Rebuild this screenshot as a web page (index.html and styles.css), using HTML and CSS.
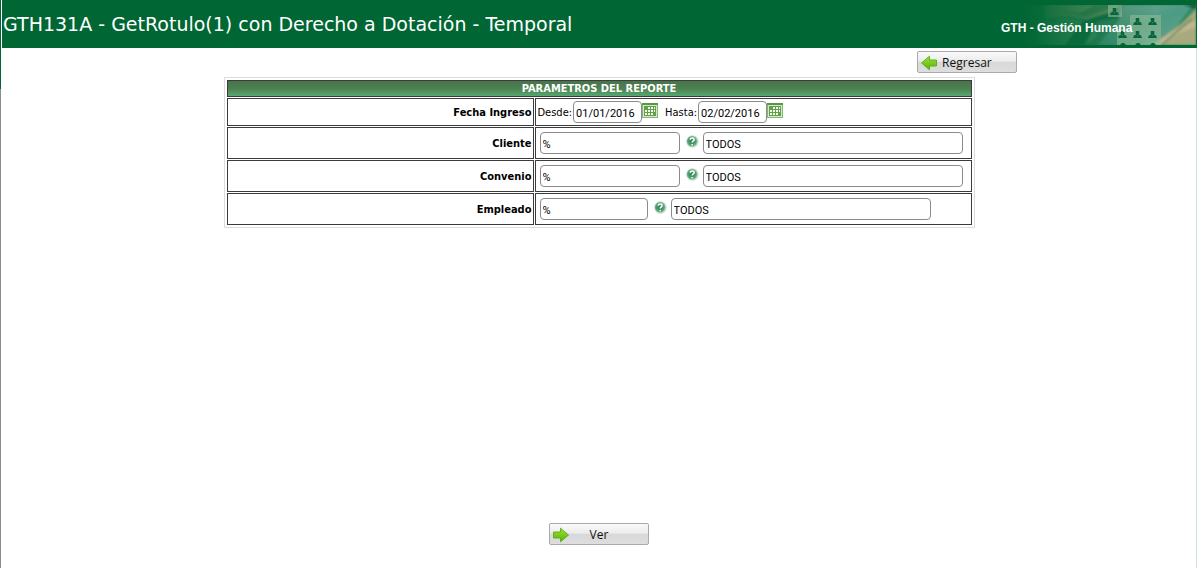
FILE: index.html
```html
<!DOCTYPE html>
<html lang="es">
<head>
<meta charset="utf-8">
<title>GTH131A - GetRotulo(1) con Derecho a Dotación - Temporal</title>
<link rel="stylesheet" href="styles.css">
</head>
<body>
<svg class="defs" aria-hidden="true">
  <defs>
    <linearGradient id="leaf" x1="0" y1="0" x2="0" y2="1"><stop offset="0" stop-color="#a2e03c"/><stop offset="1" stop-color="#55b400"/></linearGradient>
    <radialGradient id="ball"><stop offset="0" stop-color="#2c8050"/><stop offset=".7" stop-color="#4f9c70"/><stop offset="1" stop-color="#7cbb94"/></radialGradient>
  </defs>
  <symbol id="calendar" viewBox="0 0 16 15">
    <path d="M0 0h16v15H0z" fill="#86b774"/><path d="M0 0h16v2H0z" fill="#559a42"/>
    <path d="M1 2h14v12H1z" fill="#d4e9c9"/>
    <path d="M2 3h12v10H2z" fill="#62a04c"/>
    <path d="M6 4h2v2H6zM9 4h2v2H9zM12 4h1v2h-1zM3 7h2v2H3zM6 7h2v2H6zM9 7h2v2H9zM12 7h1v2h-1zM3 10h2v2H3zM6 10h2v2H6zM9 10h2v2H9z" fill="#f4fbee"/>
  </symbol>
  <symbol id="help" viewBox="0 0 13 13">
    <circle cx="6.5" cy="6.5" r="6.2" fill="#c5dfcc"/><circle cx="6" cy="6.2" r="5.2" fill="url(#ball)"/>
    <path d="M4.3 4.7C4.3 2.4 8.2 2.5 8.1 4.7 8 6 6.2 6 6.2 7.6M6.2 9v1.3" fill="none" stroke="#fff" stroke-width="1.5"/>
  </symbol>
  <symbol id="arrow" viewBox="0 0 18 16">
    <path d="M1.5 5h7V1.2L16.5 8l-8 6.8V11h-7z" fill="url(#leaf)" stroke="#62ad20" stroke-linejoin="round"/>
  </symbol>
  <symbol id="person" viewBox="0 0 10 9">
    <path d="M3 0h4v4H6l3 1 1 3H0l1-3 3-1H3z" fill="#08643e"/><path d="M4 5h2L5 6z" fill="#75a880"/>
  </symbol>
</svg>

<header class="header">
  <h1 class="title">GTH131A - GetRotulo(1) con Derecho a Dotación - Temporal</h1>
  <div class="banner">
    <svg class="art" viewBox="0 0 196 40" aria-hidden="true">
      <defs>
        <linearGradient id="fade"><stop offset=".12" stop-color="#063"/><stop offset=".55" stop-color="#063" stop-opacity=".35"/><stop offset=".8" stop-color="#063" stop-opacity="0"/></linearGradient>
        <linearGradient id="cloth" x1="0" y1="0" x2="1" y2="1"><stop offset="0" stop-color="#80aa98"/><stop offset=".5" stop-color="#4c9b85"/><stop offset="1" stop-color="#6aa189"/></linearGradient>
        <filter id="soft"><feGaussianBlur stdDeviation="1"/></filter>
      </defs>
      <path d="M0 0h196v40H0z" fill="#338965"/>
      <g filter="url(#soft)">
        <path d="M45 0h80l-12 11-19 4-27-4-22 3z" fill="#799c70"/>
        <path d="M58 6l28 6 19-6 12-6H94L80 8z" fill="#4b8759"/>
        <path d="M35 20l30-7 27 5 5 13-12 9H40z" fill="#53976f"/>
        <path d="M85 40l12-24 27-4 12-12h-16l-13 8-25 8-17 24z" fill="#196f4b"/>
        <path d="M122 0h70l-14 20-22 20H98l21-25z" fill="url(#cloth)"/>
        <path d="M196 4v36h-44l14-10 16-12z" fill="#a6aa7c"/>
        <path d="M196 15l-23 11-21 14h12l13-11 19-7z" fill="#c0b791"/>
        <path d="M174 29l-12 11M192 14l-18 15" stroke="#6d9168" stroke-width="2"/>
        <path d="M184 0h12v4z" fill="#164f3b"/>
      </g>
      <path d="M0 0h196v40H0z" fill="url(#fade)"/>
      <path d="M108 0h14v12h-14zM130 10h14v14h-14zM144 10h17v14h-17zM130 24h14v16h-14zM144 24h17v16h-17zM117 24h13v16h-13z" fill="#8fbb96" opacity=".6"/>
      <use href="#person" x="110" y="3" width="9" height="8"/>
      <use href="#person" x="133" y="13" width="9" height="8"/><use href="#person" x="148" y="13" width="9" height="8"/>
      <use href="#person" x="118" y="26" width="9" height="8"/><use href="#person" x="133" y="26" width="9" height="8"/><use href="#person" x="148" y="26" width="9" height="8"/>
      <path d="M120 40l2-2h2l2 2zM135 40l2-2h2l2 2zM150 40l2-2h2l2 2z" fill="#08643e"/>
    </svg>
    <span class="module">GTH - Gestión Humana</span>
  </div>
</header>

<main class="main">
  <div class="toolbar">
    <button class="button" type="button"><svg class="arrow back" aria-hidden="true"><use href="#arrow"/></svg><span class="caption">Regresar</span></button>
  </div>
  <form class="form">
    <table class="params">
      <colgroup><col class="names"><col></colgroup>
      <thead><tr><th class="heading" colspan="2">PARAMETROS DEL REPORTE</th></tr></thead>
      <tbody>
        <tr>
          <th class="name" scope="row">Fecha Ingreso</th>
          <td class="value"><div class="dates">
            <label class="date-label" for="desde">Desde:</label><input class="field date" id="desde" value="01/01/2016"><button class="icon-button calendar" type="button" aria-label="Calendario desde"><svg class="calendar-icon"><use href="#calendar"/></svg></button>
            <label class="date-label" for="hasta">Hasta:</label><input class="field date" id="hasta" value="02/02/2016"><button class="icon-button" type="button" aria-label="Calendario hasta"><svg class="calendar-icon"><use href="#calendar"/></svg></button>
          </div></td>
        </tr>
        <tr>
          <th class="name" scope="row"><label for="cliente">Cliente</label></th>
          <td class="value"><div class="lookup"><input class="field code" id="cliente" value="%"><button class="icon-button" type="button" aria-label="Buscar cliente"><svg class="help-icon"><use href="#help"/></svg></button><input class="field detail" aria-label="Nombre del cliente" value="TODOS"></div></td>
        </tr>
        <tr>
          <th class="name" scope="row"><label for="convenio">Convenio</label></th>
          <td class="value"><div class="lookup"><input class="field code" id="convenio" value="%"><button class="icon-button" type="button" aria-label="Buscar convenio"><svg class="help-icon"><use href="#help"/></svg></button><input class="field detail" aria-label="Nombre del convenio" value="TODOS"></div></td>
        </tr>
        <tr>
          <th class="name" scope="row"><label for="empleado">Empleado</label></th>
          <td class="value"><div class="lookup"><input class="field code short" id="empleado" value="%"><button class="icon-button" type="button" aria-label="Buscar empleado"><svg class="help-icon"><use href="#help"/></svg></button><input class="field detail" aria-label="Nombre del empleado" value="TODOS"></div></td>
        </tr>
      </tbody>
    </table>
    <div class="actions">
      <button class="button" type="button"><svg class="arrow" aria-hidden="true"><use href="#arrow"/></svg><span class="caption">Ver</span></button>
    </div>
  </form>
</main>
</body>
</html>
```
FILE: styles.css
```css
* { box-sizing: border-box; }
body {
  margin: 0;
  min-height: 100vh;
  display: flex;
  flex-direction: column;
  padding-left: 1px;
  border-style: solid;
  border-width: 0 0 0 1px;
  border-image: linear-gradient(#063 90px, #8c8c8c 90px) 1;
  background: #fff;
  font: 11px/14px "DejaVu Sans Condensed", "DejaVu Sans", sans-serif;
  color: #000;
}
.defs { position: absolute; width: 0; height: 0; }
.header {
  display: flex;
  align-items: center;
  justify-content: space-between;
  height: 48px;
  margin-right: 1px;
  padding-right: 1px;
  background: #063;
}
.title {
  margin: 0;
  padding-left: 1px;
  font: 19px/24px "DejaVu Sans", sans-serif;
  color: #fff;
  white-space: nowrap;
}
.banner { display: grid; align-items: center; margin-top: 2px; }
.art { grid-area: 1 / 1; width: 196px; height: 40px; }
.module {
  grid-area: 1 / 1;
  padding: 5px 0 0 1px;
  font: bold 12px/14px "Liberation Sans", sans-serif;
  color: #fff;
}
.main {
  flex: 1;
  display: flex;
  flex-direction: column;
  margin-right: 1px;
  border-right: 1px solid #d5e1e8;
}
.toolbar { display: flex; justify-content: flex-end; padding: 3px 15% 4px 0; }
.form { flex: 1; display: flex; flex-direction: column; align-items: center; }
.params {
  width: 100%;
  max-width: 751px;
  table-layout: fixed;
  border: 1px solid #dcdce0;
  border-spacing: 1px;
  padding: 1px;
}
.names { width: 307px; }
.params th, .params td { border: 1px solid #3c3c3c; padding: 1px; }
.params .heading {
  padding: 1px 1px 0;
  line-height: 14px;
  color: #fff;
  background: linear-gradient(#48744b, #4d8050 50%, #56a871);
}
.params .name { padding-top: 3px; text-align: right; }
.dates { display: flex; align-items: center; height: 24px; }
.date-label { padding: 1px 1px 0; }
.calendar { margin-right: 6px; }
.lookup { display: flex; align-items: center; height: 28px; padding-left: 3px; }
.field {
  height: 22px;
  min-width: 0;
  padding: 2px 2px 0;
  border: 1px solid #8b8b8b;
  border-radius: 4px;
  background: #fff;
  font: 11px/16px Roboto, sans-serif;
  color: #000;
}
.date { width: 69px; }
.code { width: 140px; }
.short { width: 108px; }
.detail { width: 260px; }
.icon-button { display: flex; padding: 0; border: 0; background: none; }
.lookup .icon-button { margin: 0 4px 3px 6px; }
.dates .icon-button { margin-bottom: 3px; }
.calendar-icon { width: 16px; height: 15px; }
.help-icon { width: 13px; height: 13px; }
.button {
  display: grid;
  align-items: center;
  width: 100px;
  height: 22px;
  padding: 0 2px;
  border: 1px solid #aaa;
  border-radius: 2px;
  background: linear-gradient(#fafafa, #ececec 45%, #d8d8d8 52%, #dedede);
  font: 12px/20px "Open Sans", sans-serif;
  color: #111;
}
.arrow { grid-area: 1 / 1; width: 18px; height: 16px; }
.back { transform: scaleX(-1); }
.caption { grid-area: 1 / 1; padding-top: 1px; text-align: center; }
.actions { margin-top: auto; padding-bottom: 23px; }
```
